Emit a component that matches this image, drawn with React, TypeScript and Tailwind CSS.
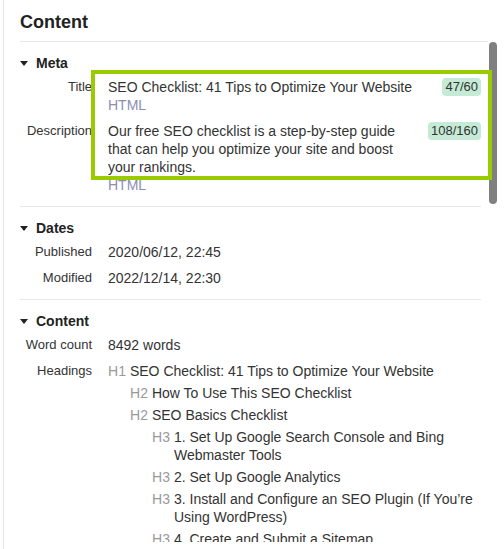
import React from "react";

const Tri = () => (
  <svg width="8" height="5" viewBox="0 0 8 5" className="shrink-0">
    <path d="M0 0 L8 0 L4 5 Z" fill="#222" />
  </svg>
);

function Section({ title, children, last }: { title: string; children: React.ReactNode; last?: boolean }) {
  return (
    <div className={"pt-[12px] pb-[12px] " + (last ? "" : "border-b border-[#e8e8e8]")}>
      <div className="flex items-center gap-[8px] font-bold text-[#222]">
        <Tri />
        <span>{title}</span>
      </div>
      <div className="mt-[6px] flex flex-col gap-[8px]">{children}</div>
    </div>
  );
}

function Row({ label, children }: { label: string; children: React.ReactNode }) {
  return (
    <div className="grid grid-cols-[72px_1fr] gap-x-[16px]">
      <div className="text-right text-[13px] leading-[18px] text-[#333] whitespace-nowrap">{label}</div>
      <div>{children}</div>
    </div>
  );
}

function Badge({ children }: { children: React.ReactNode }) {
  return (
    <span className="shrink-0 h-[18px] px-[3px] rounded-[4px] bg-[#c5ead6] text-[13px] leading-[18px] text-[#333]">
      {children}
    </span>
  );
}

const headings: [number, string][] = [
  [1, "SEO Checklist: 41 Tips to Optimize Your Website"],
  [2, "How To Use This SEO Checklist"],
  [2, "SEO Basics Checklist"],
  [3, "1. Set Up Google Search Console and Bing Webmaster Tools"],
  [3, "2. Set Up Google Analytics"],
  [3, "3. Install and Configure an SEO Plugin (If You’re Using WordPress)"],
  [3, "4. Create and Submit a Sitemap"],
  [3, "5. Create a Robots.txt File"],
  [3, "6. Check Search Console for Manual Actions"],
];

export default function App() {
  return (
    <div className="relative w-[504px] h-[549px] overflow-hidden bg-white font-['Liberation_Sans',Arial,sans-serif] text-[14px] leading-[18px] text-[#333]">
      <div className="ml-[3px] h-full border-l border-[#e6e6e6] pl-[16px] flex flex-col">
        <div className="mr-[16px] h-[42px] shrink-0 border-b border-[#e8e8e8] pt-[11px] text-[18px] leading-[22px] font-bold text-[#222]">
          Content
        </div>
        <div className="flex flex-1 min-h-0 pr-[7px] mb-[7px]">
          <div className="flex-1 min-w-0 overflow-hidden">
            <Section title="Meta">
              <Row label="Title">
                <div className="flex items-start justify-between gap-[14px]">
                  <div>
                    <div>SEO Checklist: 41 Tips to Optimize Your Website</div>
                    <div className="text-[#8d8db0]">HTML</div>
                  </div>
                  <Badge>47/60</Badge>
                </div>
              </Row>
              <Row label="Description">
                <div className="flex items-start justify-between gap-[14px]">
                  <div>
                    <div>
                      Our free SEO checklist is a step-by-step guide that can help you optimize your site and boost your rankings.
                    </div>
                    <div className="text-[#8d8db0]">HTML</div>
                  </div>
                  <Badge>108/160</Badge>
                </div>
              </Row>
            </Section>
            <Section title="Dates">
              <Row label="Published">2020/06/12, 22:45</Row>
              <Row label="Modified">2022/12/14, 22:30</Row>
            </Section>
            <Section title="Content" last>
              <Row label="Word count">8492 words</Row>
              <Row label="Headings">
                <div className="flex flex-col gap-[4px]">
                  {headings.map(([lvl, text], i) => (
                    <div
                      key={i}
                      className={"flex gap-[4px] " + (lvl === 2 ? "ml-[22px]" : lvl === 3 ? "ml-[44px]" : "")}
                    >
                      <span className="shrink-0 text-[#999]">H{lvl}</span>
                      <span>{text}</span>
                    </div>
                  ))}
                </div>
              </Row>
            </Section>
          </div>
          <div className="ml-[8px] w-[8px] shrink-0">
            <div className="h-[162px] w-[8px] rounded-full bg-[#808080]" />
          </div>
        </div>
      </div>
      <div className="absolute left-[91px] top-[70px] w-[401px] h-[110px] border-[4px] border-[#99cc00] pointer-events-none" />
    </div>
  );
}
